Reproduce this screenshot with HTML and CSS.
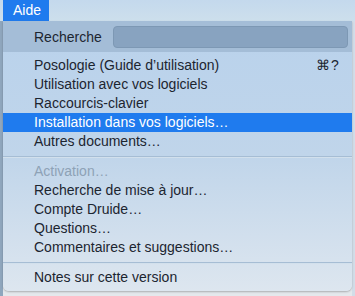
FILE: index.html
```html
<!DOCTYPE html>
<html lang="fr">
<head>
<meta charset="utf-8">
<link rel="stylesheet" href="styles.css">
</head>
<body>
<div class="menubar">
  <div class="menubar-item active">Aide</div>
</div>
<div class="stage">
  <div class="menu">
    <div class="search-row">
      <span class="search-label">Recherche</span>
      <div class="search-field"></div>
    </div>
    <div class="items">
      <div class="item"><span>Posologie (Guide d’utilisation)</span><span class="shortcut">⌘?</span></div>
      <div class="item"><span>Utilisation avec vos logiciels</span></div>
      <div class="item"><span>Raccourcis-clavier</span></div>
      <div class="item selected"><span>Installation dans vos logiciels…</span></div>
      <div class="item"><span>Autres documents…</span></div>
      <div class="sep"></div>
      <div class="item disabled"><span>Activation…</span></div>
      <div class="item"><span>Recherche de mise à jour…</span></div>
      <div class="item"><span>Compte Druide…</span></div>
      <div class="item"><span>Questions…</span></div>
      <div class="item"><span>Commentaires et suggestions…</span></div>
      <div class="sep"></div>
      <div class="item"><span>Notes sur cette version</span></div>
    </div>
  </div>
</div>
</body>
</html>
```
FILE: styles.css
```css
* { box-sizing: border-box; }
html, body { margin: 0; padding: 0; }
body {
  width: 355px;
  height: 296px;
  overflow: hidden;
  background: #e4e8ec;
  font-family: "Liberation Sans", Arial, sans-serif;
  font-size: 14px;
  color: #1c2530;
}
.menubar {
  height: 21px;
  background: linear-gradient(to bottom, #c4d9ed, #cddfec);
  padding-left: 3px;
  display: flex;
}
.menubar-item {
  padding: 0 10px;
  line-height: 21px;
  height: 21px;
}
.menubar-item.active {
  background: #1f7bee;
  color: #fff;
  width: 46px;
}
.stage {
  display: flex;
  background: linear-gradient(to right, #8fa6bd 0, #8fa6bd 3px, transparent 3px, transparent 352px, #d2dde8 352px);
  height: 275px;
}
.menu {
  margin-left: 3px;
  width: 349px;
  height: 270px;
  border-radius: 0 0 6px 6px;
  background: linear-gradient(to bottom, #b9d2ec 0%, #c0d5ea 50%, #dde6ef 100%);
  box-shadow: 0 1px 2px rgba(0,0,0,0.25);
  overflow: hidden;
}
.search-row {
  height: 31px;
  background: #a4bdd7;
  display: flex;
  align-items: center;
  padding-left: 31px;
  padding-right: 4px;
}
.search-label {
  width: 79px;
}
.search-field {
  flex: 1;
  height: 22px;
  background: #88a3c0;
  border: 1px solid #7d98b4;
  border-radius: 4px;
}
.items {
  padding-top: 4px;
}
.item {
  height: 19px;
  line-height: 19px;
  padding-left: 31px;
  padding-right: 12px;
  display: flex;
  justify-content: space-between;
}
.item.selected {
  background: #1f7bee;
  color: #fff;
}
.item.disabled {
  color: #8ea2b6;
}
.shortcut {
  width: 22px;
  margin-right: 2px;
  letter-spacing: 1px;
}
.sep {
  height: 11px;
  display: flex;
  align-items: center;
}
.sep::before {
  content: "";
  display: block;
  width: 100%;
  height: 2px;
  background: linear-gradient(to bottom, #a6bdd4 50%, #d2e0ec 50%);
}
```
